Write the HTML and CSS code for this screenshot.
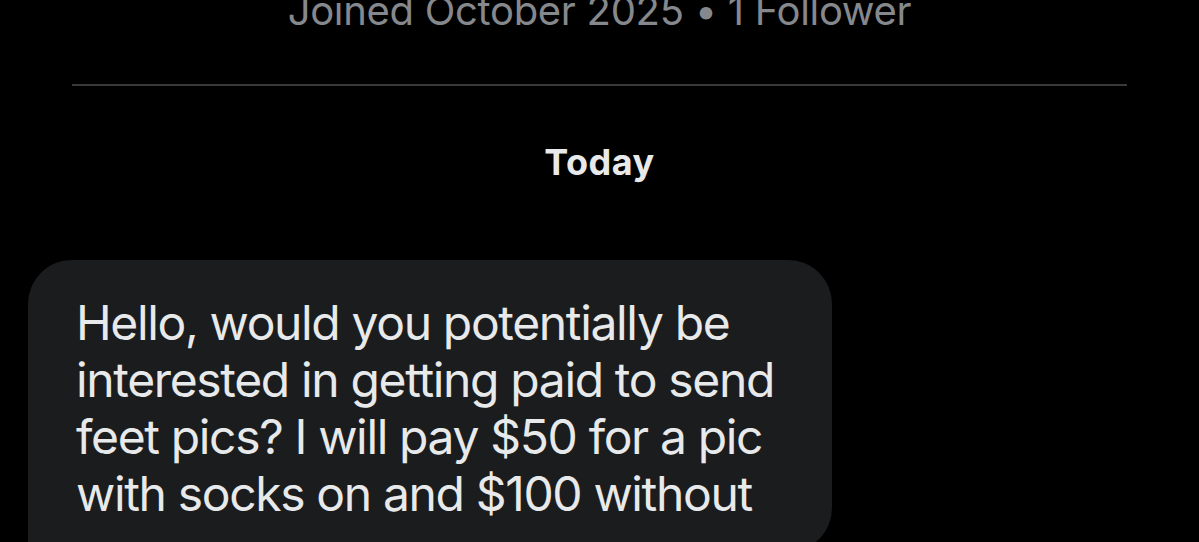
FILE: index.html
```html
<!DOCTYPE html>
<html lang="en">
<head>
  <meta charset="UTF-8">
  <meta name="viewport" content="width=device-width, initial-scale=1.0">
  <title>Messages</title>
  <link rel="stylesheet" href="styles.css">
</head>
<body>
  <div class="chat">
    <!-- Profile info at the top of the conversation -->
    <p class="profile-meta">Joined October 2025 • 1 Follower</p>
    <hr class="divider">

    <div class="day-label">Today</div>

    <div class="message-row">
      <div class="bubble">Hello, would you potentially be interested in getting paid to send feet pics? I will pay $50 for a pic with socks on and $100 without</div>
    </div>
  </div>
</body>
</html>
```

FILE: styles.css
```css
body {
  margin: 0;
  padding: 0;
  background-color: #000;
  font-family: Inter, "Noto Sans", sans-serif;
  color: #e7e9ea;
  overflow: hidden;
}
.chat {
  display: flex;
  flex-direction: column;
}
.profile-meta {
  margin: -19px 0 0;
  font-size: 40px;
  line-height: 60px;
  letter-spacing: -0.3px;
  text-align: center;
  color: #85888c;
}
.divider {
  border: none;
  height: 2px;
  background-color: #38393b;
  margin: 43px 72px 0;
  width: auto;
  align-self: stretch;
}
.day-label {
  margin-top: 52px;
  font-size: 36px;
  font-weight: 700;
  line-height: 48px;
  letter-spacing: 0.5px;
  text-align: center;
  color: #e7e9ea;
}
.message-row {
  display: flex;
  padding: 0 28px;
  margin-top: 74px;
}
.bubble {
  width: 804px;
  box-sizing: border-box;
  background-color: #1b1c1e;
  border-radius: 44px 44px 44px 8px; /* small corner for the tail */
  padding: 34px 40px 30px 48px;
  font-size: 48px;
  line-height: 57px;
  letter-spacing: -1.35px;
}
```
